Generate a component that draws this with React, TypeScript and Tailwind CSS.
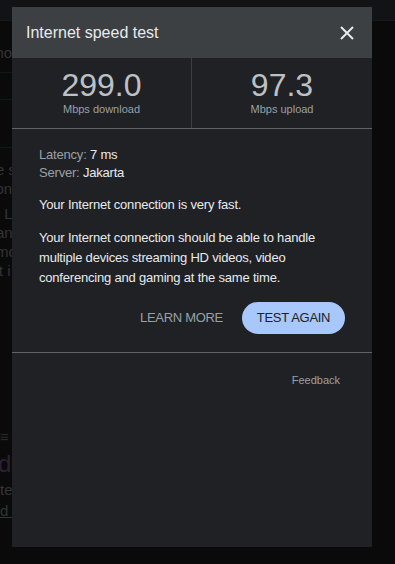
import React from "react";

function CloseIcon() {
  return (
    <svg width="14" height="14" viewBox="0 0 14 14" fill="none">
      <path d="M1 1 L13 13 M13 1 L1 13" stroke="#e8eaed" strokeWidth="2" />
    </svg>
  );
}

export default function App() {
  return (
    <div
      className="relative w-[395px] h-[564px] overflow-hidden bg-[#0a0a0a]"
      style={{ fontFamily: "'Liberation Sans', Arial, sans-serif" }}
    >
      {/* dimmed page behind */}
      <div className="h-[21px] bg-[#121315] border-b border-[#161719]" />
      <div className="w-[12px] overflow-hidden text-[#333436] text-[15px]">
        <div className="h-[52px] border-b border-[#151618] flex items-end pb-[8px] -ml-[12px] whitespace-nowrap">shop</div>
        <div className="h-[27px] border-b border-[#151618]" />
        <div className="h-[48px] border-b border-[#151618]" />
        <div className="mt-[12px] -ml-[4px] whitespace-nowrap leading-[19px]">
          <div>e s</div>
          <div className="-ml-[8px]">tion</div>
          <div className="mt-[6px] text-[#2d3442]">t L</div>
          <div>anc</div>
          <div>mo</div>
          <div>'t i</div>
        </div>
        <div className="mt-[146px] whitespace-nowrap">
          <div className="text-[#2a2a2c]">≡</div>
          <div className="text-[24px] text-[#2b2235] -ml-[2px] leading-[30px]">dl</div>
          <div className="leading-[22px]">te</div>
          <div className="leading-[20px] underline">d r</div>
        </div>
      </div>

      {/* modal */}
      <div className="absolute left-[12px] top-[7px] w-[360px] h-[540px] bg-[#202124] flex flex-col">
        <div className="h-[51px] bg-[#3c4043] flex items-center justify-between pl-[14px] pr-[18px]">
          <span className="text-[16px] text-[#e8eaed]">Internet speed test</span>
          <CloseIcon />
        </div>
        <div className="h-[71px] grid grid-cols-2 border-b border-[#5f6368]">
          <div className="flex flex-col items-center border-r border-[#3c4043] pt-[9px]">
            <span className="text-[32px] leading-[36px] text-[#bdc1c6]">299.0</span>
            <span className="text-[11px] leading-[13px] text-[#9aa0a6]">Mbps download</span>
          </div>
          <div className="flex flex-col items-center pt-[9px]">
            <span className="text-[32px] leading-[36px] text-[#bdc1c6]">97.3</span>
            <span className="text-[11px] leading-[13px] text-[#9aa0a6]">Mbps upload</span>
          </div>
        </div>
        <div className="px-[27px] pt-[17px] text-[13px] tracking-[-0.2px] text-[#e8eaed]">
          <div className="leading-[18px]">
            <span className="text-[#9aa0a6]">Latency: </span>7 ms
          </div>
          <div className="leading-[18px]">
            <span className="text-[#9aa0a6]">Server: </span>Jakarta
          </div>
          <p className="mt-[14px] leading-[18px]">Your Internet connection is very fast.</p>
          <p className="mt-[14px] leading-[20px]">
            Your Internet connection should be able to handle multiple devices streaming HD videos, video conferencing and gaming at the same time.
          </p>
        </div>
        <div className="flex justify-end items-center gap-[19px] pr-[27px] mt-[14px]">
          <span className="text-[13px] tracking-[-0.3px] text-[#9aa0a6]">LEARN MORE</span>
          <span className="h-[32px] w-[103px] rounded-full bg-[#a8c7fa] text-[#202124] text-[13px] tracking-[-0.3px] flex items-center justify-center">
            TEST AGAIN
          </span>
        </div>
        <div className="mt-[18px] border-t border-[#5f6368]" />
        <div className="flex justify-end pr-[32px] pt-[19px]">
          <span className="text-[11px] text-[#9aa0a6]">Feedback</span>
        </div>
      </div>
    </div>
  );
}
